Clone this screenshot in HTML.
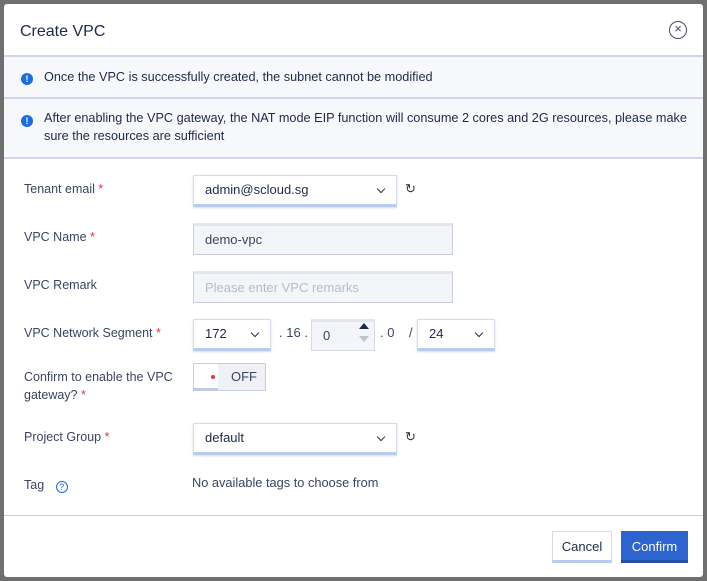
<!DOCTYPE html>
<html><head><meta charset="utf-8"><style>
*{box-sizing:border-box;margin:0;padding:0}
body{width:707px;height:581px;background:#6f6f6f;font-family:"Liberation Sans",sans-serif;position:relative;overflow:hidden}
.m{position:absolute;left:4px;top:4px;width:699px;height:573px;background:#fff;border-radius:3px}
.t{position:absolute;left:16px;top:19px;font-size:16px;color:#1e2a4a}
.x{position:absolute;left:665px;top:17px;width:18px;height:18px;border:1.5px solid #444c5e;border-radius:50%;font-size:13px;line-height:14px;text-align:center;color:#444c5e}
.al{position:absolute;left:0;width:699px;background:#f7f8fb;border-top:2px solid #d0d5e8;font-size:12.7px;color:#1e2a4a;line-height:18px}
.al i{position:absolute;left:17px;width:12px;height:12px;border-radius:50%;background:#1a6ce0;color:#fff;font-size:9px;font-style:normal;font-weight:bold;text-align:center;line-height:12px}
.lb{position:absolute;left:20px;font-size:12.5px;color:#3a4560;line-height:18px}
.lb b{color:#e0383e;font-weight:normal}
.in{position:absolute;height:32px;border:1px solid #c8cde0;border-top:3px solid #e4e6ee;background:#f4f5f8;font-size:13px;color:#3a4560;padding-left:11px;line-height:27px}
.sel{position:absolute;height:32px;border:1px solid #d6d9e6;border-bottom:3px solid #b9cbee;background:#fff;font-size:13px;color:#1e2a4a;padding-left:11px;line-height:28px;box-shadow:0 1px 2px rgba(0,0,0,.15)}
.sel:after{content:"";position:absolute;right:12px;top:10px;width:5px;height:5px;border-right:1.3px solid #333;border-bottom:1.3px solid #333;transform:rotate(45deg)}
.rf{position:absolute;font-size:13px;color:#333}
.tx{position:absolute;font-size:13px;color:#3a4560}
.btn{position:absolute;height:32px;font-size:13px;line-height:30px;text-align:center}
</style></head><body>
<div class="m">
<div class="t">Create VPC</div>
<div class="x">×</div>
<div class="al" style="top:51px;height:42px;padding:11px 0 0 40px"><i style="top:16px">!</i>Once the VPC is successfully created, the subnet cannot be modified</div>
<div class="al" style="top:93px;height:62px;padding:10px 10px 0 40px;border-bottom:2px solid #d0d5e8"><i style="top:16px">!</i>After enabling the VPC gateway, the NAT mode EIP function will consume 2 cores and 2G resources, please make sure the resources are sufficient</div>

<div class="lb" style="top:176px">Tenant email <b>*</b></div>
<div class="sel" style="left:189px;top:171px;width:204px">admin@scloud.sg</div>
<div class="rf" style="left:401px;top:177px">↻</div>

<div class="lb" style="top:224px">VPC Name <b>*</b></div>
<div class="in" style="left:189px;top:219px;width:260px">demo-vpc</div>

<div class="lb" style="top:272px">VPC Remark</div>
<div class="in" style="left:189px;top:267px;width:260px;color:#b8bcc8">Please enter VPC remarks</div>

<div class="lb" style="top:320px">VPC Network Segment <b>*</b></div>
<div class="sel" style="left:189px;top:315px;width:78px">172</div>
<div class="tx" style="left:275px;top:321px">. 16 .</div>
<div class="in" style="left:307px;top:315px;width:64px;border-color:#d6d9e6;border-top-color:#e4e6ee">0</div>
<div style="position:absolute;left:355px;top:319px;border:5px solid transparent;border-bottom:6px solid #1e2a4a;border-top:0"></div>
<div style="position:absolute;left:355px;top:332px;border:5px solid transparent;border-top:6px solid #c0c4cc;border-bottom:0"></div>
<div class="tx" style="left:376px;top:321px">. 0</div>
<div class="tx" style="left:405px;top:321px">/</div>
<div class="sel" style="left:413px;top:315px;width:78px">24</div>

<div class="lb" style="top:364px;width:160px">Confirm to enable the VPC gateway? <b>*</b></div>
<div style="position:absolute;left:189px;top:359px;width:73px;height:28px;border:1px solid #c8cde0;background:#f0f1f6;font-size:13px;color:#3a4560;line-height:26px;padding-left:37px">OFF</div>
<div style="position:absolute;left:190px;top:360px;width:24px;height:26px;background:#fff;border-bottom:2px solid #b9cbee"></div>
<div style="position:absolute;left:207px;top:371px;width:4px;height:4px;border-radius:50%;background:#e0383e"></div>

<div class="lb" style="top:424px">Project Group <b>*</b></div>
<div class="sel" style="left:189px;top:419px;width:204px">default</div>
<div class="rf" style="left:401px;top:425px">↻</div>

<div class="lb" style="top:472px">Tag <span style="display:inline-block;width:12px;height:12px;border:1.3px solid #1a6ce0;border-radius:50%;color:#1a6ce0;font-size:9px;line-height:10px;text-align:center;margin-left:8px;vertical-align:-1px">?</span></div>
<div class="tx" style="left:188px;top:471px;font-size:12.8px">No available tags to choose from</div>

<div style="position:absolute;left:0;top:511px;width:699px;border-top:1px solid #c9ced8"></div>
<div class="btn" style="left:548px;top:527px;width:60px;border:1px solid #d6d9e6;border-bottom:3px solid #b9cbee;color:#1e2a4a;line-height:30px">Cancel</div>
<div class="btn" style="left:617px;top:527px;width:67px;background:#2e64cf;color:#fff;border-bottom:3px solid #2450a8;line-height:32px">Confirm</div>
</div>
</body></html>
